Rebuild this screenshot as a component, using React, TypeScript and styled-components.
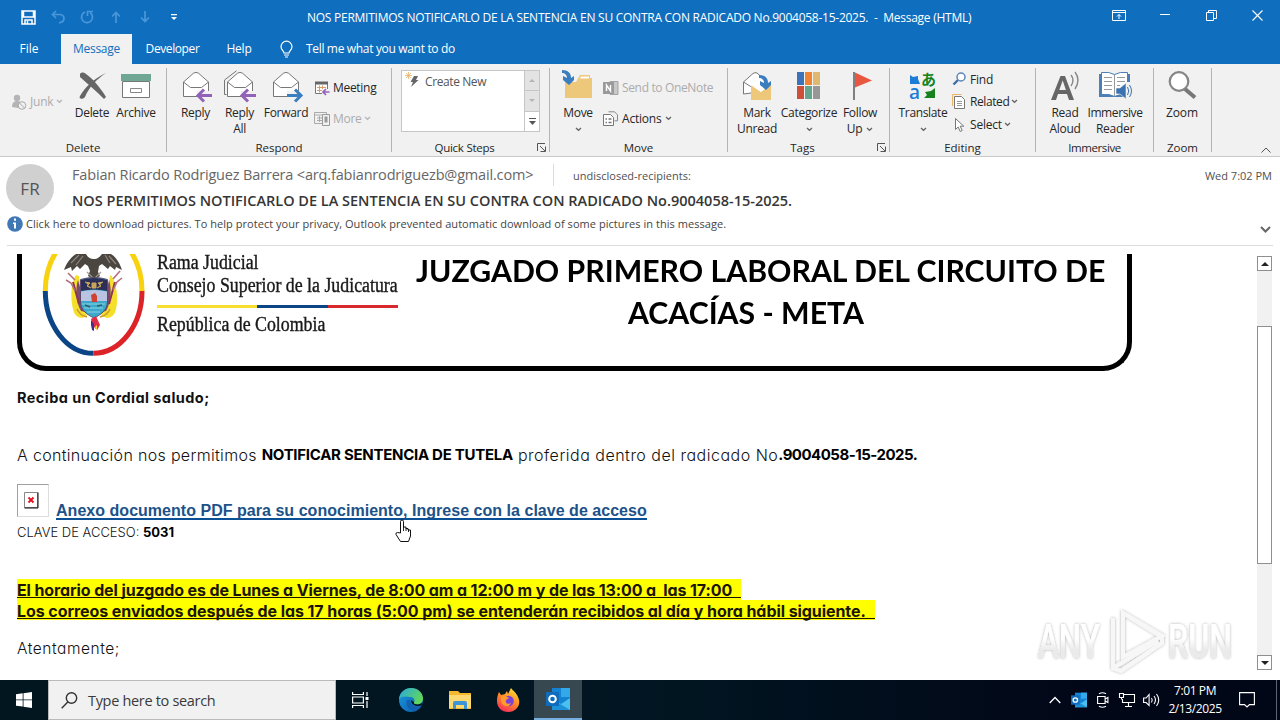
import { ReactNode } from "react";
import styled, { createGlobalStyle, css } from "styled-components";

const GlobalStyle = createGlobalStyle`
  * {
    box-sizing: border-box;
  }
  body {
    margin: 0;
    overflow: hidden;
    background: #fff;
    font-family: "Open Sans", "Noto Sans", sans-serif;
    font-size: 12px;
    color: #262626;
  }
  svg {
    display: block;
    flex: none;
    overflow: visible;
  }
`;

const Window = styled.div`
  position: relative;
  width: 1280px;
  height: 720px;
  display: flex;
  flex-direction: column;
  overflow: hidden;
`;

const Label = styled.span<{ $size?: number; $ls?: number }>`
  display: inline-block;
  white-space: pre;
  font-size: ${({ $size = 12 }) => $size}px;
  letter-spacing: ${({ $ls = 0 }) => $ls}px;
`;

/* title bar */

const TitleBar = styled.header`
  display: flex;
  height: 34px;
  background: #106ebe;
  color: #fff;
`;

const QuickAccess = styled.div`
  display: flex;
  width: 307px;
  padding-left: 14px;
`;

const QuickButton = styled.div<{ $dim?: boolean }>`
  width: 29px;
  height: 34px;
  display: flex;
  align-items: center;
  justify-content: center;
  color: ${({ $dim }) => ($dim ? "#4a97d9" : "#fff")};
`;

const WindowTitle = styled.div`
  flex: 1;
  line-height: 35px;
`;

const WindowButton = styled.div`
  width: 46px;
  height: 30px;
  display: flex;
  align-items: center;
  justify-content: center;
`;

/* tabs */

const Tabs = styled.nav`
  display: flex;
  height: 30px;
  background: #106ebe;
  color: #fff;
  line-height: 30px;
`;

const Tab = styled.div<{ $width: number; $active?: boolean }>`
  width: ${({ $width }) => $width}px;
  text-align: center;
  ${({ $active }) =>
    $active &&
    css`
      background: #f1f1f1;
      color: #106ebe;
    `}

  &:first-child {
    padding-right: 3px;
  }
`;

const TellMe = styled.div`
  display: flex;
  align-items: center;
  gap: 13px;
  margin-left: 15px;
`;

/* ribbon */

const Ribbon = styled.div`
  position: relative;
  display: flex;
  height: 93px;
  padding-top: 4px;
  background: #f1f1f1;
  border-bottom: 1px solid #c9c9c9;
`;

const Group = styled.section<{ $width: number }>`
  display: flex;
  flex-direction: column;
  width: ${({ $width }) => $width}px;
  height: 84px;
  border-right: 1px solid #b4b4b4;
`;

const GroupBody = styled.div<{ $pad?: number }>`
  display: flex;
  flex: none;
  height: 71px;
  padding-left: ${({ $pad = 0 }) => $pad}px;
`;

const GroupLabel = styled.div`
  display: flex;
  align-items: center;
  flex: none;
  height: 17px;
  line-height: 17px;

  > span {
    flex: 1;
    text-align: center;
  }
  > svg {
    margin-right: 3px;
  }
`;

const Big = styled.div<{ $width: number }>`
  width: ${({ $width }) => $width}px;
  flex: none;
  display: flex;
  flex-direction: column;
  align-items: center;
  padding-top: 2px;
  line-height: 16px;

  > svg {
    margin-bottom: 3px;
  }
`;

const BigLine = styled.div`
  display: flex;
  align-items: center;
  justify-content: center;
  gap: 4px;
  height: 16px;
`;

const SmallColumn = styled.div<{ $pad?: number; $top: number; $width?: number }>`
  width: ${({ $width }) => ($width ? `${$width}px` : "auto")};
  padding: ${({ $top }) => $top}px 0 0 ${({ $pad = 0 }) => $pad}px;
`;

const Small = styled.div<{ $height: number; $dim?: boolean; $gap?: number }>`
  display: flex;
  align-items: center;
  gap: ${({ $gap = 3 }) => $gap}px;
  height: ${({ $height }) => $height}px;
  color: ${({ $dim }) => ($dim ? "#acacac" : "inherit")};
`;

const Gallery = styled.div`
  display: flex;
  width: 139px;
  height: 62px;
  margin: 2px 0 0 9px;
  border: 1px solid #c6c6c6;
  background: #fff;
`;

const GalleryItem = styled.div`
  flex: 1;
  display: flex;
  gap: 4px;
  padding: 1px 0 0 3px;
  color: #555;
  line-height: 20px;
`;

const GallerySpin = styled.div`
  width: 15px;
  display: flex;
  flex-direction: column;
  border-left: 1px solid #c6c6c6;
`;

const SpinButton = styled.div<{ $dim?: boolean }>`
  flex: 1;
  display: flex;
  align-items: center;
  justify-content: center;
  background: ${({ $dim }) => ($dim ? "#e3e3e3" : "#fff")};
  color: ${({ $dim }) => ($dim ? "#b5b5b5" : "#555")};

  & + & {
    border-top: 1px solid #c6c6c6;
  }
`;

const Collapse = styled.div`
  margin: 79px 9px 0 auto;
`;

/* message header */

const MessageHeader = styled.div`
  display: flex;
  height: 55px;
  padding: 7px 8px 0 6px;
`;

const Avatar = styled.div`
  width: 48px;
  height: 48px;
  border-radius: 50%;
  background: #d0d0d0;
  color: #555;
  line-height: 49px;
  text-align: center;
`;

const HeaderMain = styled.div`
  flex: 1;
  margin-left: 18px;
`;

const FromRow = styled.div`
  display: flex;
  height: 22px;
  line-height: 22px;
  color: #666;
`;

const Sender = styled.div`
  width: 482px;
  height: 22px;
  border-right: 1px solid #dcdcdc;
`;

const Recipients = styled.div`
  padding: 1px 0 0 19px;
  color: #505050;
`;

const Subject = styled.div`
  margin-top: 3px;
  line-height: 24px;
  font-weight: 600;
  color: #363636;
`;

const Received = styled.div`
  line-height: 24px;
  color: #505050;
`;

const InfoBar = styled.div`
  display: flex;
  align-items: center;
  gap: 3px;
  height: 34px;
  margin: 0 7px;
  padding-bottom: 10px;
  border-bottom: 1px solid #dcdcdc;
  color: #444;

  > svg:last-child {
    margin: 13px 2px 0 auto;
  }
`;

/* message body */

const Reading = styled.main`
  display: flex;
  height: 434px;
  padding: 8px 8px 0 17px;
`;

const Article = styled.article`
  flex: 1;
  font-family: Inter, sans-serif;
  font-feature-settings: "cv11";
  color: #111;
`;

const Banner = styled.div`
  display: flex;
  width: 1115px;
  height: 117px;
  border: 5px solid #000;
  border-top: 0;
  border-radius: 0 0 29px 29px;
`;

const Seal = styled.div`
  width: 123px;
  padding-left: 18px;
`;

const Court = styled.div`
  width: 241px;
  margin: -3px 0 0 12px;
  font-family: "Liberation Serif", serif;
  color: #1a1a1a;
`;

const CourtLine = styled.div`
  height: 23px;
  line-height: 23px;
  font-size: 20.5px;
  white-space: nowrap;
  -webkit-text-stroke: 0.4px #1a1a1a;
  transform: scaleX(0.87);
  transform-origin: left;
`;

const Stripe = styled.div`
  height: 3px;
  margin: 8px 0 5px;
  background: linear-gradient(
    90deg,
    #f6df2e 0 100px,
    #0b4586 100px 171px,
    #d8292f 171px
  );
`;

const CourtName = styled.div`
  width: 688px;
  margin: -5px 0 0 18px;
  font-family: Lato, sans-serif;
  font-weight: 700;
  font-size: 30px;
  line-height: 42px;
  color: #000;
`;

const CourtNameLine = styled.div<{ $shift?: number }>`
  width: max-content;
  margin-left: ${({ $shift = 0 }) => $shift}px;
  white-space: nowrap;
  transform: scaleX(1.007);
  transform-origin: left;
`;

const Para = styled.p<{ $top: number; $light?: boolean }>`
  display: flex;
  height: 20px;
  margin: ${({ $top }) => $top}px 0 0;
  line-height: 20px;
  font-weight: ${({ $light }) => ($light ? 300 : 700)};

  b {
    font-weight: 700;
    color: #000;
  }
`;

const Attachment = styled.div`
  display: flex;
  gap: 7px;
  height: 33px;
  margin-top: 19px;
`;

const MissingPicture = styled.div`
  width: 32px;
  height: 33px;
  padding: 7px 0 0 6px;
  border: 1px solid #dcdcdc;
  border-top-color: #a0a0a0;
  border-left-color: #a0a0a0;
`;

const PdfLink = styled.a`
  height: 19px;
  margin-top: 17px;
  border-bottom: 2px solid #0b4f94;
  line-height: 19px;
  font-family: "Liberation Sans", Arial, sans-serif;
  font-weight: 700;
  color: #1c5289;
`;

const Notices = styled.div`
  margin-top: 37px;
`;

const Notice = styled.div<{ $width: number }>`
  width: ${({ $width }) => $width}px;
  height: 20.5px;
  background: #ff0;
  color: #1a1400;
  font-weight: 700;
  line-height: 22px;

  > span {
    width: 100%;
    height: 19px;
    border-bottom: 1px solid #1a1400;
  }
`;

const ScrollBar = styled.div`
  width: 15px;
  height: 414px;
  margin-top: 2px;
  display: flex;
  flex-direction: column;
  background: #f1f1f1;
`;

const ScrollButton = styled.div`
  height: 15px;
  display: flex;
  align-items: center;
  justify-content: center;
  border: 1px solid #8f8f8f;
  background: #fff;
`;

const ScrollThumb = styled.div`
  height: 238px;
  margin: 55px 0 auto;
  border: 1px solid #8f8f8f;
  background: #fff;
`;

/* overlays */

const Watermark = styled.div`
  position: absolute;
  left: 1030px;
  top: 600px;
`;

const HandCursor = styled.div`
  position: absolute;
  left: 394px;
  top: 519px;
`;

/* taskbar */

const Taskbar = styled.footer`
  display: flex;
  height: 40px;
  background: linear-gradient(90deg, #01161f, #011622 50%, #020718 85%);
  color: #fff;
`;

const TaskButton = styled.div<{ $width?: number; $active?: boolean }>`
  width: ${({ $width = 48 }) => $width}px;
  display: flex;
  align-items: center;
  justify-content: center;
  ${({ $active }) =>
    $active &&
    css`
      background: #384851;
      border-bottom: 2px solid #76b0e0;
    `}
`;

const SearchBox = styled.div`
  width: 288px;
  display: flex;
  align-items: center;
  gap: 10px;
  padding-left: 12px;
  background: #f1f1f1;
  border: 1px solid #b9b9b9;
  color: #3a3a3a;
`;

const Tray = styled.div`
  display: flex;
  margin-left: auto;
`;

const Clock = styled.div`
  width: 64px;
  display: flex;
  flex-direction: column;
  align-items: center;
  padding-top: 2px;
  line-height: 18px;
`;

const ShowDesktop = styled.div`
  width: 4px;
  margin-left: 9px;
  border-left: 1px solid #5c6670;
`;

/* icons */

function Chevron({ color = "#666" }: { color?: string }) {
  return (
    <svg width="7" height="5" viewBox="0 0 7 5" fill="none" stroke={color} strokeWidth="1.3">
      <path d="M1 1l2.5 2.3L6 1" />
    </svg>
  );
}

function LauncherIcon() {
  return (
    <svg width="9" height="9" viewBox="0 0 9 9" fill="none" stroke="#555">
      <path d="M.5 8V.5H8M3 3l5 5M8.5 3.5v5h-5" />
    </svg>
  );
}

function Icon32({ children }: { children: ReactNode }) {
  return (
    <svg width="32" height="32" viewBox="0 0 32 32" fill="none">
      {children}
    </svg>
  );
}

function Icon16({ children }: { children: ReactNode }) {
  return (
    <svg width="16" height="16" viewBox="0 0 16 16" fill="none">
      {children}
    </svg>
  );
}

function Envelope() {
  return (
    <g stroke="#777" strokeLinejoin="round">
      <path d="M3.5 12L13.5 3.2Q16 1.6 18.5 3.2L28.5 12v14.5h-25z" fill="#fff" />
      <path d="M3.5 12l7 5.5h11l7-5.5" />
    </g>
  );
}

function ArrowLeft() {
  return (
    <g>
      <path d="M17 21h14v10H18z" fill="#f1f1f1" />
      <path d="M32 25.5H18.5M24 19.5l-6 6 6 6" stroke="#9262b8" strokeWidth="3" />
    </g>
  );
}

const DeleteIcon = () => (
  <Icon32>
    <path
      d="M4 4c1-2 4-2 6 0 7 5 14 13 20 23l-2 2C21 22 12 14 4 7zM30 3c-9 6-17 14-21 24-2 3-7 2-5-1C9 17 19 8 30 3z"
      fill="#666"
    />
  </Icon32>
);

const ArchiveIcon = () => (
  <Icon32>
    <path d="M2.5 11.5h27v16h-27z" fill="#fff" stroke="#777" />
    <path d="M1 4h30v7H1z" fill="#6fa794" />
    <path d="M10.5 18.5h11v4h-11z" stroke="#888" />
  </Icon32>
);

const ReplyIcon = () => (
  <Icon32>
    <Envelope />
    <ArrowLeft />
  </Icon32>
);

const ReplyAllIcon = () => (
  <Icon32>
    <path d="M2.5 24.5H.5V10L12.5.8" stroke="#777" />
    <Envelope />
    <ArrowLeft />
  </Icon32>
);

const ForwardIcon = () => (
  <Icon32>
    <Envelope />
    <path d="M17 21h14v10H17z" fill="#f1f1f1" />
    <path d="M17 25.5h13.5M25 19.5l6 6-6 6" stroke="#3a7ebf" strokeWidth="3" />
  </Icon32>
);

const JunkIcon = () => (
  <Icon16>
    <circle cx="6" cy="4" r="3.2" fill="#b4b4b4" />
    <path d="M1 13c0-4 2-6 5-6s4 1 4 3l-3 4z" fill="#b4b4b4" />
    <circle cx="11" cy="11.5" r="3.8" fill="#f1f1f1" stroke="#a8a8a8" />
    <path d="M8.5 9l5 5" stroke="#a8a8a8" />
  </Icon16>
);

const MeetingIcon = () => (
  <Icon16>
    <path d="M1.5 2.5h12v11h-12z" fill="#fff" stroke="#777" />
    <path d="M1 1.5h13v3H1z" fill="#666" />
    <path d="M3 7.5h9M3 10.5h6M5.5 5.5v7M8.5 5.5v7" stroke="#dc9a66" />
    <path d="M8 9h8v6H8z" fill="#f1f1f1" />
    <path d="M15.5 12H9M12 9l-3 3 3 3" stroke="#9262b8" strokeWidth="1.7" />
  </Icon16>
);

const MoreIcon = () => (
  <Icon16>
    <path d="M.5 1.5h12v11H.5zM.5 4h12M3 7h6M3 9.5h5M5.5 5v6" stroke="#aaa" />
    <path d="M8.5 3.5h7v11h-7z" fill="#f1f1f1" stroke="#9a9a9a" />
    <path d="M10.5 5.5h3v6h-3z" fill="#999" />
  </Icon16>
);

const QuickStepIcon = () => (
  <svg width="16" height="20" viewBox="0 0 16 20">
    <path d="M9 4h4l-2 4h2.5L6 15l2-5H5.5z" fill="#666" />
    <path d="M3.5 0v7M0 3.5h7M1 1l5 5M6 1L1 6" stroke="#e9b56a" strokeWidth=".8" />
  </svg>
);

const BlueTurn = ({ x, y }: { x: number; y: number }) => (
  <path
    transform={`translate(${x} ${y})`}
    d="M0 0c6 0 9 3 9 8l3-2v4l-5 5-6-5V6l4 2c0-3-2-5-5-5z"
    fill="#3a7ebf"
  />
);

const MoveIcon = () => (
  <Icon32>
    <path d="M3 12h11l4-7h10v3h2v20H3z" fill="#edc77a" />
    <path d="M19 6.5h8v2h-9z" fill="#fff" />
    <BlueTurn x={0} y={0} />
  </Icon32>
);

const OneNoteIcon = () => (
  <Icon16>
    <path d="M7 1.5h8v13H7z" fill="#c8c8c8" stroke="#a5a5a5" />
    <path d="M0 2h11v12H0z" fill="#9a9a9a" />
    <path d="M3.5 11V5l4 6V5" stroke="#fff" strokeWidth="1.4" />
  </Icon16>
);

const ActionsIcon = () => (
  <Icon16>
    <path d="M5.5.8h6l3 3v6h-3" stroke="#888" />
    <path d="M.5 3.5h7l3 3v8H.5z" fill="#fff" stroke="#777" />
    <path d="M2.5 8h1.5M5.5 8h3M2.5 11.5h1.500M5.500 11.500h3" stroke="#777" strokeWidth="1.3" />
  </Icon16>
);

const UnreadIcon = () => (
  <Icon32>
    <path d="M2.5 12L12 3.500Q14 2 16 3l10 9v11H10l-7.500 1z" fill="#fff" stroke="#777" />
    <path d="M2.5 12l8 5" stroke="#777" />
    <path d="M10 13h20v17H10z" fill="#edc77a" />
    <path d="M10 12.500h20l-3 6-7 4-10-6z" fill="#fff" />
    <path d="M10 16l10 7 9-7" stroke="#edc77a" strokeWidth="1.5" />
    <BlueTurn x={18} y={5} />
  </Icon32>
);

const CategorizeIcon = () => (
  <Icon32>
    <path d="M4 2h7v13H4z" fill="#3e72b8" />
    <path d="M12 2h7v13h-7z" fill="#ef8435" />
    <path d="M20 2h7v13h-7z" fill="#e0b970" />
    <path d="M4 16h7v13H4z" fill="#cd4e3b" />
    <path d="M12 16h7v13h-7z" fill="#66a58d" />
    <path d="M20 16h7v13h-7z" fill="#979797" />
  </Icon32>
);

const FlagIcon = () => (
  <Icon32>
    <path d="M9 2h2v28H9z" fill="#808080" />
    <path d="M11 2.5l17 8-17 7z" fill="#e8573f" />
  </Icon32>
);

const TranslateIcon = () => (
  <Icon32>
    <path d="M3 5l3 2 5-1v3l2 5H3z" fill="#1c7cd6" />
    <path d="M28 18v10H17l3-3-2-3 6-1z" fill="#16821e" />
    <text x="2" y="29" fontSize="19" fontWeight="600" fill="#1c7cd6">
      a
    </text>
    <text x="14" y="14.5" fontSize="15" fontWeight="700" fontFamily="Noto Sans CJK JP" fill="#16821e">
      あ
    </text>
  </Icon32>
);

const FindIcon = () => (
  <Icon16>
    <path d="M1.5 13.5L6 9" stroke="#3e6ea8" strokeWidth="2.4" />
    <circle cx="9" cy="6" r="4" fill="#fff" stroke="#5a87b8" strokeWidth="1.5" />
  </Icon16>
);

const RelatedIcon = () => (
  <Icon16>
    <path d="M.5 12V.5h9" stroke="#e9b56a" />
    <path d="M2.5 2.5h7l3 3v9h-10z" fill="#fff" stroke="#777" />
    <path d="M5 7.5h5M5 9.5h5M5 11.5h5" stroke="#999" />
  </Icon16>
);

const SelectIcon = () => (
  <Icon16>
    <path d="M3.5 1.5v11l2.700-2.500 2 4.500 2-1-2-4.300h3.600z" fill="#fff" stroke="#777" />
  </Icon16>
);

const ReadAloudIcon = () => (
  <Icon32>
    <path d="M2 30L11.5 6h4.500L25 30h-5l-2-6H9l-2 6zM10.300 20h6.600L13.700 10.500z" fill="#666" />
    <path d="M22 5q4 5 0 11M26 2q6 8 0 17" stroke="#888" strokeWidth="1.4" />
  </Icon32>
);

const ReaderIcon = () => (
  <Icon32>
    <path d="M0 4h31v23H0z" fill="#4b7fb5" />
    <path d="M2.5 2.5q8-1 13 2 5-3 13-2v22q-8-1-13 2-5-3-13-2z" fill="#fff" stroke="#4b7fb5" />
    <path d="M15.5 5v21M5 7.500h8M5 11.500h8M5 15.500h8M5 19.500h8M18 7.500h8M18 11.500h8M18 15.500h3" stroke="#999" />
    <path d="M27 12h5v20h-5z" fill="#f1f1f1" />
    <path d="M17 18h4l6-5v16l-6-5h-4z" fill="#3a73b0" stroke="#f1f1f1" strokeWidth=".6" />
    <path d="M28.500 17q2.500 4 0 8M30.500 15q4 6 0 12" stroke="#3a73b0" />
  </Icon32>
);

const ZoomIcon = () => (
  <Icon32>
    <path d="M19 19l10 8.500" stroke="#777" strokeWidth="4" />
    <circle cx="13" cy="11.500" r="9.300" fill="#fff" stroke="#858585" strokeWidth="2.2" />
  </Icon32>
);

const InfoIcon = () => (
  <svg width="16" height="16" viewBox="0 0 16 16">
    <circle cx="8" cy="8" r="7.8" fill="#3f78b5" />
    <path d="M7 2.5h2v2.2H7zM6 6.5h3v6H7V8H6z" fill="#fff" />
  </svg>
);

const CoatOfArms = () => (
  <svg width="108" height="112" viewBox="0 0 108 112">
    <defs>
      <clipPath id="seal-cut">
        <path d="M0 0h108v112H0z" />
      </clipPath>
    </defs>
    <g fill="none" strokeWidth="5" clipPath="url(#seal-cut)">
      <path d="M5.3 37C5.3 3 27-25 53.5-25S102 3 102 37" stroke="#f8d10f" />
      <path d="M5.3 37c0 34 21.5 62.3 48 62.3" stroke="#0b4586" />
      <path d="M102 37c0 34-21.5 62.3-48.7 62.3" stroke="#dc2328" />
    </g>
    {/* flags */}
    <path d="M36 21c-5 8-6 22-3 34 1 6 5 9 9 9l5-2-4-12-4-28zM71 21c5 8 8 22 5 34-1 6-5 9-9 9l-6-2 4-12 5-28z" fill="#f4df2a" />
    <path d="M38 26c-3 9-2 23 3 31l4 1-3-18zM69 26c3 9 2 23-3 31l-4 1 4-18z" fill="#7b4a70" />
    <path d="M33 28l6 22M75 28l-6 22" stroke="#8f3554" strokeWidth="2" />
    <path d="M26 26l5 3 4 8M82 24l-5 4-4 8M28 19l7 7M80 17l-7 8" stroke="#b3707f" strokeWidth="1.6" fill="none" />
    <path d="M37 55c2 5 6 7 10 8M70 55c-2 5-6 7-10 8" stroke="#cc9a30" strokeWidth="1.5" fill="none" />
    {/* condor */}
    <path
      d="M24 16c2-6 6-12 12-16h10c2 4 5 5 8 5s5-1 8-5h9c6 4 9 10 11 16l-6-3-1 3-5-4-2 3-6-5-3 2-1 6 2 4-6 4-6-4 2-5-2-5-3-2-5 5-3-3-5 5-1-4z"
      fill="#4c4640"
    />
    <path d="M31 9l8-8M36 11l7-9M70 9l-5-8M76 10l-7-8" stroke="#8d867e" strokeWidth="1.2" />
    <path d="M47 18l7 7 7-7" stroke="#a59c90" strokeWidth="1.2" fill="none" />
    {/* shield */}
    <path d="M40.500 25.500q13.500-4 27 0V48c0 8-7 13-13.500 16-6.500-3-13.500-8-13.500-16z" fill="#3aa9cc" stroke="#5d4a6a" />
    <path d="M41 26q13-4 26 0v11q-13-3-26 0z" fill="#2c2f58" />
    <path d="M45 28l5 1-3 3 4 2M63 28l-5 1 3 3-4 2M52 29h4v5h-4z" stroke="#c7a65a" fill="#c7a65a" />
    <path d="M41 37.500q13-3 26 0V47H41z" fill="#b9c4e2" />
    <path d="M51 41l4-2 2 3v6h-5z" fill="#cf4130" />
    <path d="M42 50h23M44 54h19M47 58h13" stroke="#8fd3e0" strokeWidth="1.2" />
    <path d="M45 51l5 2M57 52l5-1" stroke="#275f6d" strokeWidth="1.5" />
    <path d="M51 65l5-3 4 9-3 5-4-4z" fill="#e02e48" />
    <path d="M51 66l3 4v7l-2-1-1-5z" fill="#462d88" />
    <path d="M55 73l2-2v5z" fill="#f4df2a" />
  </svg>
);

const SearchIcon = () => (
  <svg width="17" height="17" viewBox="0 0 17 17" fill="none" stroke="#333" strokeWidth="1.4">
    <circle cx="10.5" cy="6" r="5.2" />
    <path d="M6.8 10L.7 16.2" />
  </svg>
);

const EdgeIcon = () => (
  <svg width="24" height="24" viewBox="0 0 24 24">
    <defs>
      <linearGradient id="edge-top" x1="0" y1="0" x2="1" y2=".5">
        <stop offset="0" stopColor="#2aa9e0" />
        <stop offset="1" stopColor="#5fd65c" />
      </linearGradient>
      <linearGradient id="edge-body" x1="0" y1="0" x2="1" y2="1">
        <stop offset="0" stopColor="#1b9de2" />
        <stop offset="1" stopColor="#0c58a8" />
      </linearGradient>
    </defs>
    <circle cx="12" cy="12" r="12" fill="url(#edge-body)" />
    <path
      d="M0 11C1 4 6 0 12 0c7 0 12 5 12 10.5 0 4-3 6-6 6-2 0-4-.5-3-2 1-1.500.8-5-3.500-5.500C7 8 2 8 0 11z"
      fill="url(#edge-top)"
    />
    <path d="M8 12c-2 5 2 11 8 11 3-1 5-3 6-5-5 2-11 0-11-6z" fill="#1261b0" />
    <path d="M12 12c0 5 5 7 10.500 5.500L24 14c-2 2-5 3-8 2-1-.4-1.500-1-1-1.800z" fill="#011622" />
  </svg>
);

const ExplorerIcon = () => (
  <svg width="22" height="18" viewBox="0 0 22 18">
    <path d="M0 0h9l2 2h11v16H0z" fill="#f4b92f" />
    <path d="M0 4h22v13H0z" fill="#fcd971" />
    <path d="M4 18v-6q0-2 2-2h10q2 0 2 2v6h-3v-4H7v4z" fill="#3d94d6" />
  </svg>
);

const FirefoxIcon = () => (
  <svg width="23" height="24" viewBox="0 0 23 24">
    <defs>
      <linearGradient id="fox" x1=".8" y1="0" x2=".3" y2="1">
        <stop offset="0" stopColor="#ffe335" />
        <stop offset=".5" stopColor="#ff8a25" />
        <stop offset="1" stopColor="#f52d5c" />
      </linearGradient>
    </defs>
    <path d="M2 4l2 3 4-1 2-3 1 3 3-6c2 3 5 4 7 9 4 8-2 15-9.500 15S-.5 19 0 12c0-3 1-6 2-8z" fill="url(#fox)" />
    <circle cx="11.5" cy="13" r="5.3" fill="#7a42d8" />
    <path d="M4 8c4-1 6 1 8 2l-3 2c-1 3 2 5 5 3-2 5-9 4-10-2z" fill="#ff9a2b" />
  </svg>
);

function OutlookIcon({ size }: { size: number }) {
  return (
    <svg width={size} height={size} viewBox="0 0 24 24">
      <path d="M6 1h18v19H6z" fill="#1382d3" />
      <path d="M15 1h9v9h-9z" fill="#33a9ea" />
      <path d="M6 12l9 5 9-6v12H6z" fill="#4ac0f0" />
      <path d="M6 12v11h18z" fill="#1d91d8" />
      <path d="M0 5h13v14H0z" fill="#0f6cbd" />
      <circle cx="6.5" cy="12" r="3.3" fill="none" stroke="#fff" strokeWidth="2" />
    </svg>
  );
}

const WatermarkLogo = () => (
  <svg width="220" height="84" viewBox="0 0 220 84">
    <defs>
      <filter id="soft" x="-10%" y="-10%" width="120%" height="120%">
        <feDropShadow dx="0" dy="0" stdDeviation="1.8" floodColor="#000" floodOpacity=".32" />
      </filter>
      <linearGradient id="fade" x1="0" y1="0" x2="0" y2="1">
        <stop offset=".45" stopColor="#fff" />
        <stop offset=".65" stopColor="#eaeaea" />
      </linearGradient>
    </defs>
    <g filter="url(#soft)" fill="url(#fade)">
      <text x="8" y="58" fontFamily="Roboto" fontWeight="500" fontSize="49" textLength="62" lengthAdjust="spacingAndGlyphs">
        ANY
      </text>
      <text x="138" y="58" fontFamily="Roboto" fontWeight="500" fontSize="49" textLength="64" lengthAdjust="spacingAndGlyphs">
        RUN
      </text>
    </g>
    <g filter="url(#soft)" fill="none" stroke="#f7f7f7" strokeWidth="4">
      <path d="M93 13v44l39-21zM93 13l39 24M83 18v50l8 3 41-28v-7M83 68l45-27" />
    </g>
  </svg>
);

const HandIcon = () => (
  <svg width="18" height="24" viewBox="0 0 18 24">
    <path
      d="M6.5 14V2.500q0-1.500 1.500-1.500t1.500 1.500V9v-1h2.500v1.500H14V11h2.500v6l-2 5.500h-8L2 15.500q-.5-2 1.500-2z"
      fill="#fff"
      stroke="#111"
    />
    <path d="M9.5 8v4M12 9v3M14.5 10v3" stroke="#111" strokeWidth=".9" />
  </svg>
);

/* sections */

function TitleArea() {
  return (
    <>
      <TitleBar>
        <QuickAccess>
          <QuickButton>
            <svg width="15" height="15" viewBox="0 0 15 15" fill="none" stroke="currentColor" strokeWidth="1.5">
              <path d="M1 1h13v13H1zM2.500 1v6h10V1M4 14v-4h7v4M6.500 11v3" />
            </svg>
          </QuickButton>
          <QuickButton $dim>
            <svg width="14" height="14" viewBox="0 0 14 14" fill="none" stroke="currentColor" strokeWidth="1.7">
              <path d="M5 1L1.5 4.500 5 8M1.500 4.500H9q4 .5 4 4t-5 4.500" />
            </svg>
          </QuickButton>
          <QuickButton $dim>
            <svg width="14" height="14" viewBox="0 0 14 14" fill="none" stroke="currentColor" strokeWidth="1.7">
              <path d="M5 2a5.500 5.500 0 1 0 5 .5M7.500 6V1.500H13" />
            </svg>
          </QuickButton>
          <QuickButton $dim>
            <svg width="10" height="12" viewBox="0 0 10 12" fill="none" stroke="currentColor" strokeWidth="1.7">
              <path d="M5 12V1.500M1 5.500l4-4 4 4" />
            </svg>
          </QuickButton>
          <QuickButton $dim>
            <svg width="10" height="12" viewBox="0 0 10 12" fill="none" stroke="currentColor" strokeWidth="1.7">
              <path d="M5 0v10.500M1 6.500l4 4 4-4" />
            </svg>
          </QuickButton>
          <QuickButton>
            <svg width="6" height="7" viewBox="0 0 6 7" fill="currentColor">
              <path d="M0 0h6v1.300H0zM0 3h6L3 6z" />
            </svg>
          </QuickButton>
        </QuickAccess>
        <WindowTitle>
          <Label $ls={-0.258}>
            NOS PERMITIMOS NOTIFICARLO DE LA SENTENCIA EN SU CONTRA CON RADICADO No.9004058-15-2025.{"  -  "}Message (HTML)
          </Label>
        </WindowTitle>
        <WindowButton>
          <svg width="14" height="11" viewBox="0 0 14 11" fill="none" stroke="#fff">
            <path d="M.5.5h13v10H.5zM.5 2.500h13M7 9V4.500M5 6.500l2-2 2 2" />
          </svg>
        </WindowButton>
        <WindowButton>
          <svg width="10" height="2" viewBox="0 0 10 2">
            <path d="M0 0h10v1H0z" fill="#fff" />
          </svg>
        </WindowButton>
        <WindowButton>
          <svg width="11" height="11" viewBox="0 0 11 11" fill="none" stroke="#fff">
            <path d="M.5 2.500h7v8h-7zM2.500 2.500v-2h8v8h-3" />
          </svg>
        </WindowButton>
        <WindowButton>
          <svg width="11" height="11" viewBox="0 0 11 11" stroke="#fff" strokeWidth="1.1">
            <path d="M.5.5l10 10M10.500.5l-10 10" />
          </svg>
        </WindowButton>
      </TitleBar>
      <Tabs>
        <Tab $width={61}>
          <Label>File</Label>
        </Tab>
        <Tab $width={71} $active>
          <Label $ls={-0.3}>Message</Label>
        </Tab>
        <Tab $width={81}>
          <Label $ls={-0.4}>Developer</Label>
        </Tab>
        <Tab $width={52}>
          <Label $ls={-0.2}>Help</Label>
        </Tab>
        <TellMe>
          <svg width="13" height="17" viewBox="0 0 13 17" fill="none" stroke="#fff" strokeWidth="1.2">
            <path d="M4 12c0-2-3-3-3-6.300a5.400 5.400 0 0 1 11 0C12 9 9 10 9 12zM4 14h5M5 16h3" />
          </svg>
          <Label $ls={-0.33}>Tell me what you want to do</Label>
        </TellMe>
      </Tabs>
    </>
  );
}

function RibbonArea() {
  return (
    <Ribbon>
      <Group $width={167}>
        <GroupBody $pad={11}>
          <SmallColumn $top={0} $width={57}>
            <Small $height={67} $dim $gap={3}>
              <JunkIcon />
              <Label $ls={-0.2}>Junk</Label>
              <Chevron color="#b5b5b5" />
            </Small>
          </SmallColumn>
          <Big $width={48}>
            <DeleteIcon />
            <Label $ls={-0.3}>Delete</Label>
          </Big>
          <Big $width={40}>
            <ArchiveIcon />
            <Label $ls={-0.3}>Archive</Label>
          </Big>
        </GroupBody>
        <GroupLabel>
          <Label $size={11.5}>Delete</Label>
        </GroupLabel>
      </Group>
      <Group $width={225}>
        <GroupBody $pad={6}>
          <Big $width={45}>
            <ReplyIcon />
            <Label $ls={-0.3}>Reply</Label>
          </Big>
          <Big $width={43}>
            <ReplyAllIcon />
            <Label $ls={-0.3}>Reply</Label>
            <Label $ls={-0.3}>All</Label>
          </Big>
          <Big $width={50}>
            <ForwardIcon />
            <Label $ls={-0.3}>Forward</Label>
          </Big>
          <SmallColumn $pad={3} $top={4}>
            <Small $height={31}>
              <MeetingIcon />
              <Label $ls={-0.3}>Meeting</Label>
            </Small>
            <Small $height={31} $dim>
              <MoreIcon />
              <Label $ls={-0.3}>More</Label>
              <Chevron color="#b5b5b5" />
            </Small>
          </SmallColumn>
        </GroupBody>
        <GroupLabel>
          <Label $size={11.5}>Respond</Label>
        </GroupLabel>
      </Group>
      <Group $width={158}>
        <GroupBody>
          <Gallery>
            <GalleryItem>
              <QuickStepIcon />
              <Label $ls={-0.4}>Create New</Label>
            </GalleryItem>
            <GallerySpin>
              <SpinButton $dim>
                <svg width="6" height="3" fill="currentColor">
                  <path d="M0 3l3-3 3 3z" />
                </svg>
              </SpinButton>
              <SpinButton $dim>
                <svg width="6" height="3" fill="currentColor">
                  <path d="M0 0l3 3 3-3z" />
                </svg>
              </SpinButton>
              <SpinButton>
                <svg width="7" height="7" fill="currentColor">
                  <path d="M0 0h7v1H0zM0 3l3.500 4L7 3z" />
                </svg>
              </SpinButton>
            </GallerySpin>
          </Gallery>
        </GroupBody>
        <GroupLabel>
          <Label $size={11.5} $ls={-0.25}>
            Quick Steps
          </Label>
          <LauncherIcon />
        </GroupLabel>
      </Group>
      <Group $width={178}>
        <GroupBody $pad={4}>
          <Big $width={48}>
            <MoveIcon />
            <Label $ls={-0.3}>Move</Label>
            <BigLine>
              <Chevron />
            </BigLine>
          </Big>
          <SmallColumn $pad={1} $top={4}>
            <Small $height={31} $dim>
              <OneNoteIcon />
              <Label $ls={-0.35}>Send to OneNote</Label>
            </Small>
            <Small $height={31}>
              <ActionsIcon />
              <Label $ls={-0.2}>Actions</Label>
              <Chevron />
            </Small>
          </SmallColumn>
        </GroupBody>
        <GroupLabel>
          <Label $size={11.5}>Move</Label>
        </GroupLabel>
      </Group>
      <Group $width={162}>
        <GroupBody $pad={8}>
          <Big $width={42}>
            <UnreadIcon />
            <Label $ls={-0.3}>Mark</Label>
            <Label $ls={-0.3}>Unread</Label>
          </Big>
          <Big $width={62}>
            <CategorizeIcon />
            <Label $ls={-0.3}>Categorize</Label>
            <BigLine>
              <Chevron />
            </BigLine>
          </Big>
          <Big $width={40}>
            <FlagIcon />
            <Label $ls={-0.3}>Follow</Label>
            <BigLine>
              <Label $ls={-0.3}>Up</Label>
              <Chevron />
            </BigLine>
          </Big>
        </GroupBody>
        <GroupLabel>
          <Label $size={11.5}>Tags</Label>
          <LauncherIcon />
        </GroupLabel>
      </Group>
      <Group $width={146}>
        <GroupBody $pad={8}>
          <Big $width={50}>
            <TranslateIcon />
            <Label $ls={-0.35}>Translate</Label>
            <BigLine>
              <Chevron />
            </BigLine>
          </Big>
          <SmallColumn $pad={4} $top={0}>
            <Small $height={22} $gap={2}>
              <FindIcon />
              <Label $ls={-0.2}>Find</Label>
            </Small>
            <Small $height={23} $gap={2}>
              <RelatedIcon />
              <Label $ls={-0.4}>Related</Label>
              <Chevron />
            </Small>
            <Small $height={23} $gap={2}>
              <SelectIcon />
              <Label $ls={-0.2}>Select</Label>
              <Chevron />
            </Small>
          </SmallColumn>
        </GroupBody>
        <GroupLabel>
          <Label $size={11.5}>Editing</Label>
        </GroupLabel>
      </Group>
      <Group $width={118}>
        <GroupBody $pad={9}>
          <Big $width={40}>
            <ReadAloudIcon />
            <Label $ls={-0.3}>Read</Label>
            <Label $ls={-0.3}>Aloud</Label>
          </Big>
          <Big $width={60}>
            <ReaderIcon />
            <Label $ls={-0.4}>Immersive</Label>
            <Label $ls={-0.3}>Reader</Label>
          </Big>
        </GroupBody>
        <GroupLabel>
          <Label $size={11.5} $ls={-0.4}>
            Immersive
          </Label>
        </GroupLabel>
      </Group>
      <Group $width={58}>
        <GroupBody $pad={8}>
          <Big $width={40}>
            <ZoomIcon />
            <Label $ls={-0.1}>Zoom</Label>
          </Big>
        </GroupBody>
        <GroupLabel>
          <Label $size={11.5}>Zoom</Label>
        </GroupLabel>
      </Group>
      <Collapse>
        <svg width="10" height="6" viewBox="0 0 10 6" fill="none" stroke="#555">
          <path d="M.5 5.500L5 1l4.500 4.500" />
        </svg>
      </Collapse>
    </Ribbon>
  );
}

function HeaderArea() {
  return (
    <>
      <MessageHeader>
        <Avatar>
          <Label $size={17}>FR</Label>
        </Avatar>
        <HeaderMain>
          <FromRow>
            <Sender>
              <Label $size={14.5} $ls={-0.17}>
                Fabian Ricardo Rodriguez Barrera &lt;arq.fabianrodriguezb@gmail.com&gt;
              </Label>
            </Sender>
            <Recipients>
              <Label $size={11}>undisclosed-recipients:</Label>
            </Recipients>
          </FromRow>
          <Subject>
            <Label $size={14.5}>
              NOS PERMITIMOS NOTIFICARLO DE LA SENTENCIA EN SU CONTRA CON RADICADO No.9004058-15-2025.
            </Label>
          </Subject>
        </HeaderMain>
        <Received>
          <Label $size={11}>Wed 7:02 PM</Label>
        </Received>
      </MessageHeader>
      <InfoBar>
        <InfoIcon />
        <Label $size={11} $ls={0.045}>
          Click here to download pictures. To help protect your privacy, Outlook prevented automatic download of some pictures in this message.
        </Label>
        <svg width="11" height="8" viewBox="0 0 11 8" fill="none" stroke="#666" strokeWidth="2">
          <path d="M1 1l4.500 4.500L10 1" />
        </svg>
      </InfoBar>
    </>
  );
}

function MessageBody() {
  return (
    <Reading>
      <Article>
        <Banner>
          <Seal>
            <CoatOfArms />
          </Seal>
          <Court>
            <CourtLine>Rama Judicial</CourtLine>
            <CourtLine>Consejo Superior de la Judicatura</CourtLine>
            <Stripe />
            <CourtLine>República de Colombia</CourtLine>
          </Court>
          <CourtName>
            <CourtNameLine>JUZGADO PRIMERO LABORAL DEL CIRCUITO DE</CourtNameLine>
            <CourtNameLine $shift={212}>ACACÍAS - META</CourtNameLine>
          </CourtName>
        </Banner>
        <Para $top={17}>
          <Label $size={14.5} $ls={0.44}>
            Reciba un Cordial saludo;
          </Label>
        </Para>
        <Para $top={37} $light>
          <Label $size={16} $ls={0.32}>
            A continuación nos permitimos{" "}
          </Label>
          <Label $size={15} $ls={-0.28}>
            <b>NOTIFICAR SENTENCIA DE TUTELA</b>
          </Label>
          <Label $size={16} $ls={0.5}>
            {" "}
            proferida dentro del radicado No
          </Label>
          <Label $size={15} $ls={-0.5}>
            <b>.9004058-15-2025.</b>
          </Label>
        </Para>
        <Attachment>
          <MissingPicture>
            <svg width="15" height="17" viewBox="0 0 15 17" fill="none">
              <path d="M.5.5h13v15H.5z" fill="#fff" stroke="#888" />
              <path d="M14 .5V16H.5" stroke="#111" />
              <path d="M4.500 5.500l5 5M9.500 5.500l-5 5" stroke="#e00f1b" strokeWidth="1.8" />
            </svg>
          </MissingPicture>
          <PdfLink>
            <Label $size={16} $ls={0.03}>
              Anexo documento PDF para su conocimiento, Ingrese con la clave de acceso
            </Label>
          </PdfLink>
        </Attachment>
        <Para $top={5} $light>
          <Label $size={13}>CLAVE DE ACCESO: </Label>
          <Label $size={13}>
            <b>5031</b>
          </Label>
        </Para>
        <Notices>
          <Notice $width={724}>
            <Label $size={16} $ls={-0.115}>
              El horario del juzgado es de Lunes a Viernes, de 8:00 am a 12:00 m y de las 13:00 a{"  "}las 17:00
            </Label>
          </Notice>
          <Notice $width={858}>
            <Label $size={16} $ls={-0.07}>
              Los correos enviados después de las 17 horas (5:00 pm) se entenderán recibidos al día y hora hábil siguiente.
            </Label>
          </Notice>
        </Notices>
        <Para $top={19} $light>
          <Label $size={15.5} $ls={0.55}>
            Atentamente;
          </Label>
        </Para>
      </Article>
      <ScrollBar>
        <ScrollButton>
          <svg width="8" height="4" fill="#222">
            <path d="M0 4l4-4 4 4z" />
          </svg>
        </ScrollButton>
        <ScrollThumb />
        <ScrollButton>
          <svg width="8" height="4" fill="#222">
            <path d="M0 0l4 4 4-4z" />
          </svg>
        </ScrollButton>
      </ScrollBar>
    </Reading>
  );
}

function TaskbarArea() {
  return (
    <Taskbar>
      <TaskButton>
        <svg width="16" height="16" viewBox="0 0 16 16" fill="#fff">
          <path d="M0 2.200L6.700 1.300v6.200H0zM7.500 1.200L16 0v7.500H7.500zM0 8.300h6.700v6.300L0 13.700zM7.500 8.300H16V16l-8.500-1.200z" />
        </svg>
      </TaskButton>
      <SearchBox>
        <SearchIcon />
        <Label $size={14.5} $ls={-0.32}>
          Type here to search
        </Label>
      </SearchBox>
      <TaskButton>
        <svg width="17" height="16" viewBox="0 0 17 16" fill="none" stroke="#fff" strokeWidth="1.2">
          <path d="M.6 0v2.500h10.800V0M.6 16v-2.500h10.800V16M.6 5h10.800v6H.6zM15 0v4M15 9v7" />
          <path d="M13.500 5h3v3h-3z" fill="#fff" stroke="none" />
        </svg>
      </TaskButton>
      <TaskButton $width={54}>
        <EdgeIcon />
      </TaskButton>
      <TaskButton $width={44}>
        <ExplorerIcon />
      </TaskButton>
      <TaskButton $width={52}>
        <FirefoxIcon />
      </TaskButton>
      <TaskButton $active>
        <OutlookIcon size={24} />
      </TaskButton>
      <Tray>
        <TaskButton $width={24}>
          <svg width="12" height="8" viewBox="0 0 12 8" fill="none" stroke="#fff" strokeWidth="1.3">
            <path d="M.7 7L6 1.500 11.300 7" />
          </svg>
        </TaskButton>
        <TaskButton $width={24}>
          <OutlookIcon size={16} />
        </TaskButton>
        <TaskButton $width={24}>
          <svg width="12" height="16" viewBox="0 0 12 16" fill="none" stroke="#fff" strokeWidth="1.1">
            <path d="M.6 4.500h7.500v7H.6zM8.200 7l2.700-1.500v5L8.200 9M2 1.700Q5.500-.3 9 1.700M2 14.300q3.500 2 7 0" />
          </svg>
        </TaskButton>
        <TaskButton $width={24}>
          <svg width="16" height="14" viewBox="0 0 16 14" fill="none" stroke="#fff" strokeWidth="1.1">
            <path d="M5 1.500h10.500v8H3.500V6M6 13.500h7M9.500 9.500v4M.5.5h4v4h-4zM2.500 4.500v2" />
          </svg>
        </TaskButton>
        <TaskButton $width={24}>
          <svg width="17" height="14" viewBox="0 0 17 14" fill="none" stroke="#fff" strokeWidth="1.1">
            <path d="M.6 5h2.500l3-3.500v11L3.100 9.500H.6zM8.500 5q1.500 2 0 4.500M11 3q3 4 0 8M13.500 1q4.500 6 0 12" />
          </svg>
        </TaskButton>
        <Clock>
          <Label $ls={-0.4}>7:01 PM</Label>
          <Label $ls={-0.4}>2/13/2025</Label>
        </Clock>
        <TaskButton $width={40}>
          <svg width="16" height="16" viewBox="0 0 16 16" fill="none" stroke="#fff" strokeWidth="1.1">
            <path d="M.6.6h14.800v12H10.500L8 15l-2.500-2.400H.6z" />
          </svg>
        </TaskButton>
        <ShowDesktop />
      </Tray>
    </Taskbar>
  );
}

function App() {
  return (
    <Window>
      <GlobalStyle />
      <TitleArea />
      <RibbonArea />
      <HeaderArea />
      <MessageBody />
      <TaskbarArea />
      <Watermark>
        <WatermarkLogo />
      </Watermark>
      <HandCursor>
        <HandIcon />
      </HandCursor>
    </Window>
  );
}

export default App;
